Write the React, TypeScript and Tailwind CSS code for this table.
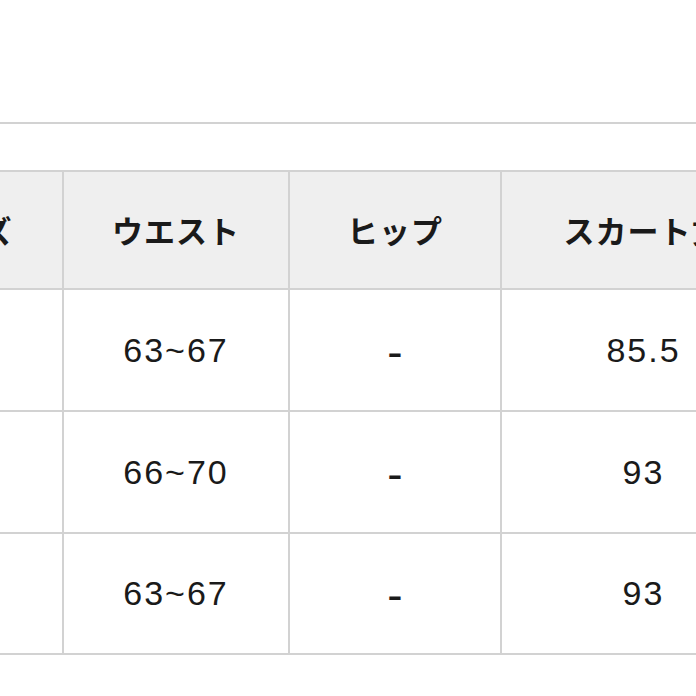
const rows = [
  { size: '', waist: '63~67', hip: '-', skirt: '85.5', h: 'h-[122px]' },
  { size: '', waist: '66~70', hip: '-', skirt: '93', h: 'h-[122px]' },
  { size: '', waist: '63~67', hip: '-', skirt: '93', h: 'h-[121px]' },
]

const jp = "font-['Noto_Sans_CJK_JP','Noto_Sans',sans-serif]"
const num = "font-['Liberation_Sans',Arial,sans-serif]"

export default function App() {
  return (
    <div className="h-[696px] w-[696px] overflow-hidden bg-white text-[#1a1a1a]">
      <div className="h-[122px]" />
      <div className="h-[48px] border-t-2 border-[#d2d2d2]" />
      <div className="ml-[-132px] grid w-[919px] grid-cols-[196px_226px_212px_285px] border-t-2 border-[#d2d2d2]">
        {['サイズ', 'ウエスト', 'ヒップ', 'スカート丈'].map((t) => (
          <div
            key={t}
            className={`flex h-[118px] items-center justify-center whitespace-nowrap border-b-2 border-r-2 border-[#d2d2d2] bg-[#efefef] text-[31px] font-bold tracking-[1px] ${jp}`}
          >
            {t}
          </div>
        ))}
        {rows.map((r, i) => (
          <div key={i} className="contents">
            {[r.size, r.waist, r.hip, r.skirt].map((v, j) => (
              <div
                key={j}
                className={`flex ${r.h} items-center justify-center border-b-2 border-r-2 border-[#d2d2d2] ${
                  j === 2 ? 'pt-[4px] text-[46px]' : 'text-[34px] tracking-[2px]'
                } ${num}`}
              >
                {v}
              </div>
            ))}
          </div>
        ))}
      </div>
    </div>
  )
}
